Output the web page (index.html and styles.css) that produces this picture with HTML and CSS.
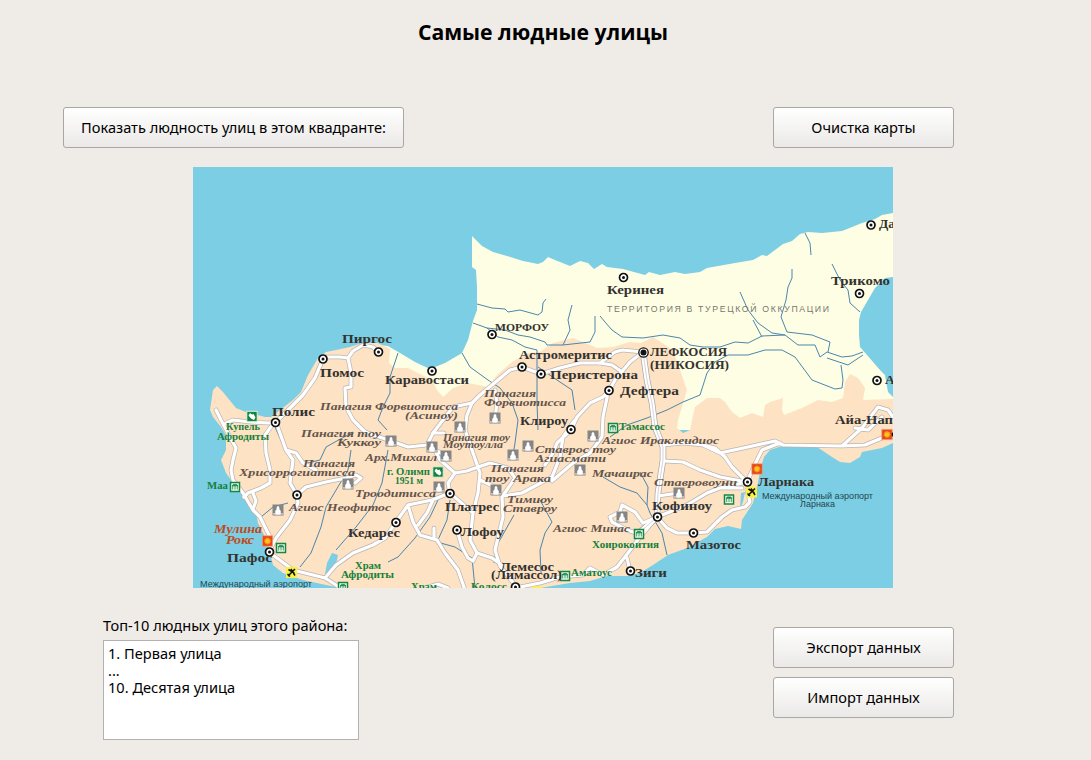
FILE: index.html
```html
<!DOCTYPE html>
<html lang="ru">
<head>
<meta charset="utf-8">
<title>Самые людные улицы</title>
<link rel="stylesheet" href="styles.css">
</head>
<body>
<main class="window">
<h1 class="title">Самые людные улицы</h1>
<div class="toolbar">
<button class="btn btn-wide">Показать людность улиц в этом квадранте:</button>
<button class="btn">Очистка карты</button>
</div>
<svg class="map" viewBox="193 167 700 421" width="700" height="421">
<defs>
<g id="town"><circle r="4" fill="#fff" stroke="#111" stroke-width="1.7"/><circle r="1.5" fill="#111"/></g>
<g id="church"><rect x="-5.5" y="-5.5" width="11" height="11" fill="#858585"/><path d="M-2.8 4.8V1L-1.4-.8V-2.5L-.7-3.8H.7L1.4-2.5V-.8L2.8 1V4.8ZM-4.5 3H-3.5V4.8H-4.500ZM3.5 3H4.500V4.8H3.500Z" fill="#fff"/></g>
<g id="museum"><rect x="-4.500" y="-4.500" width="9" height="9" fill="#eefbe9" stroke="#178546" stroke-width="1.500"/><path d="M-3-1.200L-1.500-2.600H1.500L3-1.200ZM-2.300-1V2.500M0-1V2.500M2.300-1V2.500" fill="#178546" stroke="#178546" stroke-width=".8"/></g>
<g id="nature"><rect x="-5.200" y="-5.200" width="10.400" height="10.400" fill="#158443" stroke="#dff2d8"/><path d="M-3.500-1L-2-3.500L0-2L1.500-2.500L3.500 1L2 3.500L-1 2Z" fill="#fff"/></g>
<g id="sight"><rect x="-5.200" y="-5.200" width="10.400" height="10.400" fill="#e5481b" stroke="#f4a17b" stroke-width=".7"/><circle r="2.700" fill="#ffc61b" stroke="#ff941a" stroke-dasharray="1.200 .6" stroke-width="1.500"/></g>
<g id="plane"><rect x="-5.500" y="-5.500" width="11" height="11" fill="#f8f244"/><path d="M-3.500 3.500L3.500-3.500M-3-3L3 .8M-.5-3.500L3.500 3M-4 1.500L-1.500 4" stroke="#111" stroke-width="1.500" fill="none"/></g>
<g id="roads">
<path d="M323 359L326 357L340 357L348 358L353 351L363 345L373 347L378 352M348 358L351 373V387L345 388L346 407L353 420L365 432L391 441L408 447L427 445L433 433L443 420L453 407L472 403L480 395L498 380L510 370L522 367L541 374L560 368L580 363L600 363L615 352L622 350L643 352M323 359L315 378L303 395L293 405L276 422L268 423L250 422L233 420L226 423M216 410L221 420L230 437L236 448L233 460L231 470L233 480L243 493L253 510L260 517L270 537V551"/>
<path d="M273 424L265 435L266 453L270 470V483L261 488L248 493L244 497M253 493L256 501L253 509M276 422L286 450L293 460L290 483L297 495L298 503L290 520L276 538L269 552L293 570L325 578L336 585L345 592M286 450L296 453L303 463L316 470M297 495L306 487L326 482L346 478L356 475L361 478L355 483M325 578L336 565L353 553L373 545L385 538L396 522L408 505L432 500L450 493M408 505L413 522L420 535L437 540L445 553L458 570L465 590M433 500L427 513L418 525M434 528V539"/>
<path d="M457 530L462 547L468 558L473 561L477 553L470 540L473 513L450 493L448 483L455 473L440 460L433 447M455 473L467 471L478 467L490 463L508 468L515 478L502 497L503 517L495 550L500 566L515 585M477 553L492 558L502 565M472 403L467 415L465 430L472 450L480 473L478 493L473 513M480 480L495 487M495 418L497 403L495 390M433 433H444M446 456L437 451M365 432L372 436"/>
<path d="M600 363L612 365L622 372M643 352L630 362L615 380L609 391L603 397L590 403L577 417L571 430L557 443L553 453L545 465M574 421L563 437L560 457L552 477L522 493L503 496M608 393L603 417L602 437L590 453L573 463L552 481"/>
<path d="M663 445L683 443L703 445L720 453L748 447L775 441L783 445L842 446L862 428L878 407L888 410L893 417M842 446L865 445L882 438M855 428L868 430L882 417M703 445L715 448L725 457L732 467L747 482L757 460L762 450L780 443M657 517L687 505L707 493L720 488L747 482M664 461L683 462L700 470L720 477L747 482M657 517L667 528L677 533L693 533L707 532L722 517L732 510L745 507L750 502L747 490M658 496L679 493M720 488H742"/>
<path d="M657 517L640 537L628 553L617 567L603 575L590 568L583 575L560 577L540 583L515 588M657 517L643 523L635 512L622 505L620 512L610 517L612 522L627 530L639 534M627 558L630 571M425 588L438 584L448 588"/>
</g>
<path id="highway" d="M643 352L647 380L652 403L655 427L663 447V460L658 493L657 517L638 534"/>
</defs>
<rect class="sea" x="193" y="167" width="700" height="421"/>
<path class="land-north" d="M472 236L482 246L493 252L507 256L523 261L538 264L543 262L548 257L555 260L570 266L580 261L588 263L594 269L602 264L607 267L623 269L645 275L649 272L660 275L675 272L685 274L700 272L707 268L735 263L753 260L762 255L767 256L775 250L783 244L792 241L800 234L808 232L822 233L842 231L852 227L862 223L875 219L882 215L893 213V277L885 278L875 288L868 300L861 312L859 320V335L860 347L867 355L880 370L885 375L888 392L893 397V430H620L380 400L370 344L388 346L400 353L415 362L430 369L445 363L462 353L468 340L473 321L477 310V287L476 270L472 267Z"/>
<path class="land-south" d="M326 352L336 350L350 347L362 343L378 343L390 349L389 363L395 368H408L432 380L437 390L443 397L453 388L468 383L488 387L497 375L512 362L528 353L540 352L553 343L573 338L583 342L597 348L613 347L630 342L641 343L653 337L673 350L680 370L687 390L678 420L677 428L683 433L690 430L695 407L707 398L720 398L725 402L732 412L740 418L752 413L763 417L765 405L770 402L783 398L782 410L784 415L802 408L818 400L832 402L843 398L845 382L850 374L858 378L865 388L863 400L893 399V443L882 448L862 452L860 457L850 463L840 462L832 457L817 447L802 445L782 446L770 450L764 457L761 467L757 487L753 503L742 520L741 529L728 526L715 529L707 537L687 548L668 555L653 565L640 573L627 576H607L590 581L570 583L540 588H340L326 585L303 580L283 573L273 565L270 553L265 537L258 523L256 513L248 500L236 487L226 473L221 460L226 450V435L221 427L213 417L210 410L213 390L217 386L223 392L236 408L246 412L265 417H271L293 400L301 392L308 375L318 358Z"/>
<path class="sea" d="M741 493L745 492L743 502L740 508ZM332 553L338 555L336 564L327 575L325 574L327 563Z"/>
<g class="river">
<path d="M477 304L492 308L505 309L508 312L520 310L538 315L542 312L543 303L546 299M473 323L487 328L498 337L512 340L525 347L537 350M487 328L505 330L518 335L530 337L545 342L547 345H563L590 342L595 332V316M563 345L570 330L568 320L572 305M600 316L605 322L612 330L622 337L643 338L663 335L680 338L690 345L703 347H720L735 342L748 343L762 336L785 335L798 345L815 345L820 357L827 352L842 357L852 356L863 352M827 358L848 365L863 355M740 292L748 310L758 323L772 333L785 335M753 320L762 337M792 269V278L788 287L786 300L781 317L787 332L812 335L830 342L828 352M805 233L810 243L811 255M832 264L840 280L848 290L850 303L860 312"/>
<path d="M841 365L843 380L842 388L835 389L812 380L795 357L782 350H765L748 355H728L715 362L707 373L700 395L683 402L667 410L647 418L627 425L610 437M398 353L390 377V393L383 407L378 420L387 430M462 353L470 367L488 380L500 388L512 403L518 420L515 443L513 455M537 350V403L538 430M538 367L557 380L572 390L575 410M275 427L283 445M353 432L326 447L320 460L304 464"/>
<path d="M351 450L348 470L326 507L321 527L311 553L300 567M288 503L273 507L261 517M388 450L382 483L373 505L356 527L336 550M438 500L430 517L415 538L398 557L388 562M450 500L447 520L437 542L455 547L472 558L475 588M514 515L497 545L494 563M545 533L540 550L541 573M603 477L620 487L637 493L647 505L650 513L662 533L667 555M640 472L648 487L647 505M540 500L552 522L545 533"/>
</g>
<use href="#roads" class="road-edge"/><use href="#highway" class="highway-edge"/>
<use href="#roads" class="road"/><use href="#highway" class="highway"/><use href="#highway" class="median"/>
<g>
<use href="#church" x="391" y="441"/><use href="#church" x="432" y="447"/><use href="#church" x="446" y="456"/><use href="#church" x="460" y="427"/><use href="#church" x="495" y="418"/><use href="#church" x="593" y="436"/><use href="#church" x="513" y="455"/><use href="#church" x="528" y="446"/><use href="#church" x="580" y="470"/><use href="#church" x="348" y="484"/><use href="#church" x="278" y="510"/><use href="#church" x="439" y="487"/><use href="#church" x="496" y="490"/><use href="#church" x="679" y="493"/><use href="#church" x="622" y="517"/>
<use href="#museum" x="235" y="487"/><use href="#museum" x="281" y="548"/><use href="#museum" x="343" y="587"/><use href="#museum" x="613" y="428"/><use href="#museum" x="565" y="576"/><use href="#museum" x="639" y="534"/><use href="#museum" x="729" y="499.500"/>
<use href="#nature" x="252" y="416.500"/><use href="#nature" x="438" y="472"/>
<use href="#sight" x="267.500" y="541"/><use href="#sight" x="757" y="469"/><use href="#sight" x="887" y="434.500"/>
<use href="#plane" x="291.500" y="572.500"/><use href="#plane" x="751.500" y="492"/><use href="#plane" x="537" y="592"/>
<use href="#town" x="323" y="359"/><use href="#town" x="378.500" y="352"/><use href="#town" x="432" y="371"/><use href="#town" x="492" y="334.500"/><use href="#town" x="623.500" y="277.500"/><use href="#town" x="871" y="225"/><use href="#town" x="859.500" y="293.500"/><use href="#town" x="522" y="367"/><use href="#town" x="541" y="374"/><use href="#town" x="609" y="390.500"/><use href="#town" x="571" y="429.500"/><use href="#town" x="275.500" y="422.500"/><use href="#town" x="297" y="495"/><use href="#town" x="396" y="522.500"/><use href="#town" x="450" y="493.500"/><use href="#town" x="457" y="530"/><use href="#town" x="269.500" y="552"/><use href="#town" x="657.500" y="517"/><use href="#town" x="693.500" y="533"/><use href="#town" x="747.500" y="482"/><use href="#town" x="630.500" y="571"/><use href="#town" x="515.500" y="587"/><use href="#town" x="877" y="380.500"/>
<circle cx="643.500" cy="352.500" r="4.700" fill="#fff" stroke="#111" stroke-width="1.300"/><circle cx="643.500" cy="352.500" r="3" fill="#111"/>
<circle cx="894" cy="434.500" r="2.500" fill="#111"/>
</g>
<g class="city">
<text x="342" y="343" textLength="50" lengthAdjust="spacingAndGlyphs">Пиргос</text><text x="320" y="377" textLength="44" lengthAdjust="spacingAndGlyphs">Помос</text><text x="272" y="416" textLength="43" lengthAdjust="spacingAndGlyphs">Полис</text><text x="385" y="384" textLength="84" lengthAdjust="spacingAndGlyphs">Каравостаси</text><text class="caps-small" x="495" y="331" textLength="54" lengthAdjust="spacingAndGlyphs">МОРФОУ</text><text x="607" y="294" textLength="57" lengthAdjust="spacingAndGlyphs">Керинея</text><text x="831" y="285" textLength="59" lengthAdjust="spacingAndGlyphs">Трикомо</text><text x="879" y="228">Да</text>
<text class="caps" x="650" y="356" textLength="77" lengthAdjust="spacingAndGlyphs">ЛЕФКОСИЯ</text><text class="caps" x="650" y="369" textLength="79" lengthAdjust="spacingAndGlyphs">(НИКОСИЯ)</text><text x="519" y="359" textLength="93" lengthAdjust="spacingAndGlyphs">Астромеритис</text><text x="550" y="379" textLength="88" lengthAdjust="spacingAndGlyphs">Перистерона</text><text x="620" y="395" textLength="59" lengthAdjust="spacingAndGlyphs">Дефтера</text><text x="520" y="425" textLength="48" lengthAdjust="spacingAndGlyphs">Клироу</text><text x="835" y="424" textLength="58" lengthAdjust="spacingAndGlyphs">Айа-Нап</text><text x="885" y="384">А</text>
<text x="758" y="486" textLength="56" lengthAdjust="spacingAndGlyphs">Ларнака</text><text x="652" y="510" textLength="60" lengthAdjust="spacingAndGlyphs">Кофиноу</text><text x="686" y="549" textLength="55" lengthAdjust="spacingAndGlyphs">Мазотос</text><text x="635" y="577" textLength="32" lengthAdjust="spacingAndGlyphs">Зиги</text><text x="461" y="536" textLength="43" lengthAdjust="spacingAndGlyphs">Лофоу</text><text x="445" y="511" textLength="54" lengthAdjust="spacingAndGlyphs">Платрес</text><text x="348" y="537" textLength="52" lengthAdjust="spacingAndGlyphs">Кедарес</text><text x="227" y="562" textLength="45" lengthAdjust="spacingAndGlyphs">Пафос</text><text x="500" y="571" textLength="54" lengthAdjust="spacingAndGlyphs">Лемесос</text><text x="491" y="579" textLength="71" lengthAdjust="spacingAndGlyphs">(Лимассол)</text>
</g>
<g class="sacred">
<text x="320" y="410" textLength="138" lengthAdjust="spacingAndGlyphs">Панагия Форвиотисса</text><text x="405" y="419" textLength="53" lengthAdjust="spacingAndGlyphs">(Асиноу)</text><text x="484" y="397" textLength="52" lengthAdjust="spacingAndGlyphs">Панагия</text><text x="484" y="406" textLength="82" lengthAdjust="spacingAndGlyphs">Форвиотисса</text><text x="301" y="437" textLength="80" lengthAdjust="spacingAndGlyphs">Панагия тоу</text><text x="337" y="446" textLength="44" lengthAdjust="spacingAndGlyphs">Куккоу</text><text class="sacred-small" x="443" y="441" textLength="67" lengthAdjust="spacingAndGlyphs">Панагия тоу</text><text class="sacred-small" x="443" y="448" textLength="60" lengthAdjust="spacingAndGlyphs">Моутоулла</text><text x="365" y="461" textLength="72" lengthAdjust="spacingAndGlyphs">Арх.Михаил</text>
<text x="602" y="444" textLength="117" lengthAdjust="spacingAndGlyphs">Агиос Ираклеидиос</text><text x="535" y="453" textLength="81" lengthAdjust="spacingAndGlyphs">Ставрос тоу</text><text x="535" y="462" textLength="71" lengthAdjust="spacingAndGlyphs">Агиасмати</text><text x="592" y="477" textLength="61" lengthAdjust="spacingAndGlyphs">Мачаирас</text><text x="654" y="486" textLength="83" lengthAdjust="spacingAndGlyphs">Ставровоуни</text><text x="303" y="467" textLength="52" lengthAdjust="spacingAndGlyphs">Панагия</text><text x="239" y="476" textLength="116" lengthAdjust="spacingAndGlyphs">Хрисоррогиатисса</text><text x="355" y="497" textLength="81" lengthAdjust="spacingAndGlyphs">Троодитисса</text><text x="289" y="511" textLength="102" lengthAdjust="spacingAndGlyphs">Агиос Неофитос</text>
<text x="491" y="472" textLength="53" lengthAdjust="spacingAndGlyphs">Панагия</text><text x="485" y="482" textLength="66" lengthAdjust="spacingAndGlyphs">тоу Арака</text><text x="507" y="503" textLength="46" lengthAdjust="spacingAndGlyphs">Тимиоу</text><text x="503" y="512" textLength="54" lengthAdjust="spacingAndGlyphs">Ставроу</text><text x="553" y="532" textLength="77" lengthAdjust="spacingAndGlyphs">Агиос Минас</text>
<text class="rock" x="214" y="533" textLength="48" lengthAdjust="spacingAndGlyphs">Мулина</text><text class="rock" x="226" y="544" textLength="28" lengthAdjust="spacingAndGlyphs">Рокс</text>
</g>
<g class="heritage">
<text x="226" y="430" textLength="34" lengthAdjust="spacingAndGlyphs">Купель</text><text x="217" y="440" textLength="52" lengthAdjust="spacingAndGlyphs">Афродиты</text><text x="207" y="489" textLength="21" lengthAdjust="spacingAndGlyphs">Маа</text><text x="387" y="475" textLength="43" lengthAdjust="spacingAndGlyphs">г. Олимп</text><text x="395" y="484" textLength="28" lengthAdjust="spacingAndGlyphs">1951 м</text><text x="619" y="430" textLength="46" lengthAdjust="spacingAndGlyphs">Тамассос</text><text x="571" y="576" textLength="41" lengthAdjust="spacingAndGlyphs">Аматоус</text><text x="592" y="548" textLength="67" lengthAdjust="spacingAndGlyphs">Хоирокоития</text><text x="355" y="569" textLength="26" lengthAdjust="spacingAndGlyphs">Храм</text><text x="341" y="578" textLength="53" lengthAdjust="spacingAndGlyphs">Афродиты</text><text x="411" y="590" textLength="26" lengthAdjust="spacingAndGlyphs">Храм</text><text x="471" y="590" textLength="36" lengthAdjust="spacingAndGlyphs">Колосс</text>
</g>
<g class="airport">
<text x="762" y="499" textLength="111" lengthAdjust="spacingAndGlyphs">Международный аэропорт</text><text x="800" y="507" textLength="35" lengthAdjust="spacingAndGlyphs">Ларнака</text><text x="200" y="587" textLength="112" lengthAdjust="spacingAndGlyphs">Международный аэропорт</text>
</g>
<text class="territory" x="607" y="312" textLength="222">ТЕРРИТОРИЯ В ТУРЕЦКОЙ ОККУПАЦИИ</text>
</svg>
<div class="footer">
<section class="top">
<div class="top-label">Топ-10 людных улиц этого района:</div>
<div class="list"><div>1. Первая улица</div><div>...</div><div>10. Десятая улица</div></div>
</section>
<div class="actions">
<button class="btn">Экспорт данных</button>
<button class="btn">Импорт данных</button>
</div>
</div>
</main>
</body>
</html>
```
FILE: styles.css
```css
* { box-sizing: border-box; }
body {
  margin: 0;
  height: 760px;
  overflow: hidden;
  background: #efebe7;
  color: #000;
  font-family: "Noto Sans", "Open Sans", sans-serif;
  font-size: 14.6px;
}
.window {
  display: flex;
  flex-direction: column;
  width: 1086px;
  padding: 17px 132px 0 63px;
}
.title {
  margin: 0 0 60px 69px;
  font-family: "Open Sans", "Noto Sans", sans-serif;
  font-size: 21.2px;
  font-weight: 700;
  line-height: 30px;
  text-align: center;
}
.toolbar, .footer {
  display: flex;
  justify-content: space-between;
}
.btn {
  width: 181px;
  height: 41px;
  padding: 0 0 2px;
  border: 1px solid #aaa7a4;
  border-radius: 3px;
  background: linear-gradient(#fff, #ebe9e7);
  color: #000;
  font: inherit;
  white-space: nowrap;
}
.btn-wide { width: 341px; }
.map {
  display: block;
  flex: none;
  margin: 19px 0 0 130px;
}
.footer { padding: 27px 0 0 40px; }
.top { width: 256px; }
.top-label {
  height: 25px;
  line-height: 20px;
  white-space: nowrap;
}
.list {
  height: 100px;
  padding: 4px 4px;
  border: 1px solid #b4b1ae;
  background: #fff;
  line-height: 17px;
}
.actions {
  display: flex;
  flex-direction: column;
  gap: 9px;
  padding-top: 12px;
}
.sea { fill: #7bcee3; }
.land-north { fill: #fefee4; }
.land-south { fill: #fde2c3; }
.river { fill: none; stroke: #4b86ad; stroke-width: 1; stroke-linejoin: round; }
.road-edge, .road, .highway-edge, .highway, .median {
  fill: none;
  stroke-linejoin: round;
  stroke-linecap: round;
}
.road-edge { stroke: #b9b5b4; stroke-width: 4.6; }
.road { stroke: #fff; stroke-width: 3.2; }
.highway-edge { stroke: #aaa6a8; stroke-width: 6.4; }
.highway { stroke: #fff; stroke-width: 5; }
.median { stroke: #c6c2c6; stroke-width: .7; }
.city {
  fill: #34322f;
  font: bold 13.5px "Liberation Serif", serif;
}
.caps { font-size: 12.5px; }
.caps-small { font-size: 11px; }
.sacred {
  fill: #63544b;
  font: italic bold 11px "Liberation Serif", serif;
}
.sacred-small { font-size: 9.5px; }
.rock { fill: #c04a20; font-size: 12px; }
.heritage {
  fill: #16803a;
  font: bold 10.5px "Liberation Serif", serif;
}
.airport {
  fill: #24474f;
  font: 8.8px "Liberation Sans", sans-serif;
}
.territory {
  fill: #77766f;
  font: 8.7px "Liberation Sans", sans-serif;
}
```
